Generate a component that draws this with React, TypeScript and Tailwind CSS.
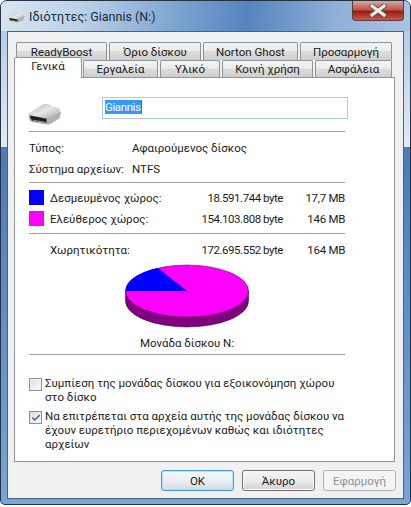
import { Check } from 'lucide-react'

function DriveIcon({ small }: { small?: boolean }) {
  const id = small ? 'drive-small' : 'drive-large'
  return (
    <svg width={small ? 17 : 33} height={small ? 11 : 23} viewBox="0 0 32 22">
      <defs>
        <linearGradient id={id} x1="0" y1="0" x2="1" y2="1">
          <stop offset="0" stopColor="#b4b4b4" />
          <stop offset="0.5" stopColor="#e8e8e8" />
          <stop offset="1" stopColor="#a4a4a4" />
        </linearGradient>
      </defs>
      <path d="M1 10 Q0 16 3 18 L19 21 Q24 20 31 14 L32 8 L20 11 Z" fill="#b0b0b0" />
      <path d="M1 10 L13 2 Q16 0 20 1 L30 5 Q32 7 30 9 L20 14 Q17 15 14 14 L3 12 Q1 12 1 10 Z" fill={`url(#${id})`} />
      <path d="M2 12 L18 15 L18 19 L4 17 Q2 15 2 12 Z" fill="#1f1f1f" />
      <path d="M5 16 L17 18 L17 19 L5 17.500 Z" fill="#8c8c8c" />
    </svg>
  )
}

function Tab({ label, w, h }: { label: string; w: string; h: string }) {
  return (
    <div className={`${w} ${h} flex items-center justify-center rounded-t-[2px] border border-b-0 border-[#8e9499] bg-[linear-gradient(#f3f3f3,#ebebeb_45%,#dcdcdc_50%,#cfcfcf)]`}>
      {label}
    </div>
  )
}

function Divider({ className = '' }: { className?: string }) {
  return <div className={`h-px w-[316px] bg-[#a0a0a0] ${className}`} />
}

function Swatch({ color }: { color: string }) {
  return <div className={`h-[15px] w-[15px] ${color}`} />
}

function Button({ label, active, disabled }: { label: string; active?: boolean; disabled?: boolean }) {
  return (
    <div
      className={`flex h-[21px] w-[73px] items-center justify-center rounded-[3px] border ${
        active
          ? 'border-[#3c9ad0] bg-[linear-gradient(#f3f9fc,#e9eef1_50%,#d3dade)] shadow-[inset_0_0_0_1px_#b5e3f7]'
          : disabled
            ? 'border-[#adb2b5] bg-[#f4f4f4] text-[#8f8f8f]'
            : 'border-[#707070] bg-[linear-gradient(#f4f4f4,#ebebeb_50%,#d2d2d2)] shadow-[inset_0_0_0_1px_#fbfbfb]'
      }`}
    >
      {label}
    </div>
  )
}

function Pie() {
  return (
    <svg width="124" height="64" viewBox="0 0 124 64">
      <path d="M0.500 27 L0.500 37 A61.500 26 0 0 0 123.500 37 L123.500 27 Z" fill="#800080" stroke="#2a002a" strokeWidth="0.5" />
      <ellipse cx="62" cy="27" rx="61.500" ry="26" fill="#ff00ff" stroke="#400040" strokeWidth="0.5" />
      <path d="M62 27 L0.500 27 A61.500 26 0 0 1 33 4 Z" fill="#0000ff" />
    </svg>
  )
}

export default function App() {
  return (
    <div className="h-[507px] w-[411px] bg-white font-['Roboto',sans-serif] text-[11.5px] leading-[14px] text-[#1a1a1a]">
      <div className="h-[505px] w-[411px] overflow-hidden rounded-t-[7px] rounded-b-[5px] border border-[#26323f] bg-[linear-gradient(#a9c5e3,#e0ebf5_29%,#4b7bb8_29.100%,#78a4d8_100%)]">
        <div className="flex h-[30px] justify-between bg-[linear-gradient(95deg,#d9e5f1_0%,#b9d0e8_20%,#7fa6d2_42%,#5584bf_60%,#8fb0d8_82%,#a9c4e2_100%)] pr-[6px] pl-[7px]">
          <div className="mt-[8px] flex h-[16px] items-center gap-[4px] text-[12.5px] text-[#1c2a38]">
            <DriveIcon small />
            <span>Ιδιότητες: Giannis (N:)</span>
          </div>
          <div className="flex h-[20px] w-[52px] items-center justify-center rounded-b-[4px] border border-t-0 border-[#5c3b3b] bg-[linear-gradient(#d9a79f,#c0584c_45%,#9c1c12_55%,#c8594a)]">
            <svg width="18" height="13" viewBox="0 0 18 13">
              <path d="M3 2 L15 11 M15 2 L3 11" stroke="#5a5a5a" strokeWidth="5" strokeLinecap="square" />
              <path d="M3 2 L15 11 M15 2 L3 11" stroke="#f1f1e8" strokeWidth="3" strokeLinecap="square" />
            </svg>
          </div>
        </div>

        <div className="mx-[6px] flex h-[468px] flex-col border border-[#4d6178] bg-[#f0f0f0] px-[6px] pt-[10px]">
          <div className="ml-[2px] flex gap-[2px]">
            <Tab label="ReadyBoost" w="w-[91px]" h="h-[18px]" />
            <Tab label="Όριο δίσκου" w="w-[92px]" h="h-[18px]" />
            <Tab label="Norton Ghost" w="w-[95px]" h="h-[18px]" />
            <Tab label="Προσαρμογή" w="w-[92px]" h="h-[18px]" />
          </div>
          <div className="relative z-10 flex h-[17px] items-end">
            <div className="relative z-10 -mb-px flex h-[21px] w-[68px] shrink-0 justify-center rounded-t-[2px] border border-b-0 border-[#8e9499] bg-white pt-[1px]">
              Γενικά
            </div>
            <div className="ml-px flex gap-[2px]">
              <Tab label="Εργαλεία" w="w-[75px]" h="h-[17px]" />
              <Tab label="Υλικό" w="w-[60px]" h="h-[17px]" />
              <Tab label="Κοινή χρήση" w="w-[91px]" h="h-[17px]" />
              <Tab label="Ασφάλεια" w="w-[77px]" h="h-[17px]" />
            </div>
          </div>

          <div className="flex h-[385px] w-[381px] flex-col border border-[#8e9499] bg-white px-[14px]">
            <div className="mt-[19px] flex h-[22px] items-start">
              <div className="ml-[-1px] w-[74px] pt-[6px]">
                <DriveIcon />
              </div>
              <div className="flex h-[22px] w-[246px] border border-[#abc8e0] pt-[2px] pl-[2px]">
                <span className="h-[14px] border-r border-[#a85a1a] bg-[#3399ff] tracking-[-0.4px] text-white">Giannis</span>
              </div>
            </div>
            <Divider className="mt-[12px]" />

            <div className="mt-[9px] flex h-[14px] items-center">
              <span className="w-[103px]">Τύπος:</span>
              <span>Αφαιρούμενος δίσκος</span>
            </div>
            <div className="mt-[7px] flex h-[14px] items-center">
              <span className="w-[103px]">Σύστημα αρχείων:</span>
              <span>NTFS</span>
            </div>
            <Divider className="mt-[6px]" />

            <div className="mt-[7px] grid w-[316px] grid-cols-[21px_1fr_auto_62px] items-center gap-y-[6px]">
              <Swatch color="bg-[#0000ff]" />
              <span>Δεσμευμένος χώρος:</span>
              <span className="text-right tracking-[-0.45px]">18.591.744 byte</span>
              <span className="text-right tracking-[-0.3px]">17,7 MB</span>
              <Swatch color="bg-[#ff00ff]" />
              <span>Ελεύθερος χώρος:</span>
              <span className="text-right tracking-[-0.45px]">154.103.808 byte</span>
              <span className="text-right tracking-[-0.3px]">146 MB</span>
            </div>
            <Divider className="mt-[7px]" />

            <div className="mt-[9px] grid h-[14px] w-[316px] grid-cols-[21px_1fr_auto_62px] items-center">
              <span />
              <span>Χωρητικότητα:</span>
              <span className="text-right tracking-[-0.45px]">172.695.552 byte</span>
              <span className="text-right tracking-[-0.3px]">164 MB</span>
            </div>

            <div className="mt-[7px] flex w-[316px] justify-center">
              <Pie />
            </div>
            <div className="mt-[8px] h-[14px] w-[316px] text-center">Μονάδα δίσκου N:</div>
            <Divider className="mt-[4px]" />

            <div className="mt-[21px] flex gap-[3px]">
              <div className="mt-[2px] h-[13px] w-[13px] shrink-0 border border-[#8e8f8f] bg-[linear-gradient(135deg,#dedede,#f8f8f8)] shadow-[inset_0_0_0_1px_#f4f4f4]" />
              <span className="w-[310px]">Συμπίεση της μονάδας δίσκου για εξοικονόμηση χώρου στο δίσκο</span>
            </div>
            <div className="mt-[5px] flex gap-[3px]">
              <div className="mt-[2px] flex h-[13px] w-[13px] shrink-0 items-center justify-center border border-[#8e8f8f] bg-[linear-gradient(135deg,#dedede,#f8f8f8)]">
                <Check size={10} strokeWidth={3.5} className="text-[#4a5f97]" />
              </div>
              <span className="w-[312px]">
                Να επιτρέπεται στα αρχεία αυτής της μονάδας δίσκου να έχουν ευρετήριο περιεχομένων καθώς και ιδιότητες αρχείων
              </span>
            </div>
          </div>

          <div className="mt-[8px] ml-[147px] flex gap-[8px]">
            <Button label="OK" active />
            <Button label="Άκυρο" />
            <Button label="Εφαρμογή" disabled />
          </div>
        </div>
      </div>
    </div>
  )
}
